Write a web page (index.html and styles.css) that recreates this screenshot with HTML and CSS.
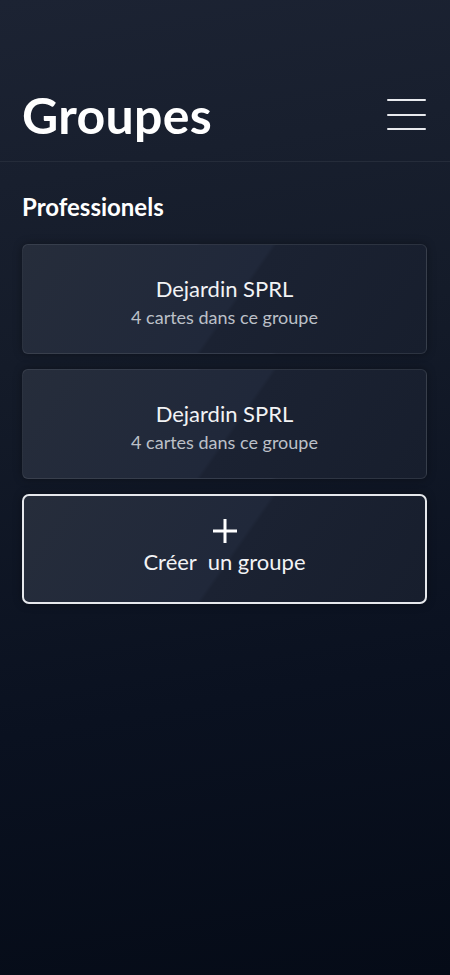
FILE: index.html
```html
<!DOCTYPE html>
<html lang="fr">
<head>
    <meta charset="UTF-8">
    <meta name="viewport" content="width=device-width, initial-scale=1.0">
    <title>Groupes</title>
    <link rel="stylesheet" href="styles.css">
</head>
<body>
    <header class="topbar">
        <h1>Groupes</h1>
        <button class="menu-btn" aria-label="Menu">
            <span></span>
            <span></span>
            <span></span>
        </button>
    </header>
    <main class="content">
        <h2 class="section-title">Professionels</h2>
        <div class="group-list">
            <a class="group-card" href="#">
                <span class="group-name">Dejardin SPRL</span>
                <span class="group-count">4 cartes dans ce groupe</span>
            </a>
            <a class="group-card" href="#">
                <span class="group-name">Dejardin SPRL</span>
                <span class="group-count">4 cartes dans ce groupe</span>
            </a>
            <a class="group-card add-card" href="#">
                <svg class="plus" width="26" height="26" viewBox="0 0 26 26">
                    <path d="M13 1v24M1 13h24" stroke="#fff" stroke-width="3" fill="none"/>
                </svg>
                <span class="group-name">Créer&nbsp; un groupe</span>
            </a>
        </div>
    </main>
</body>
</html>
```
FILE: styles.css
```css
html, body {
    margin: 0;
    padding: 0;
}
body {
    font-family: Lato, "Open Sans", sans-serif;
    color: #fff;
    min-height: 975px;
    background: linear-gradient(170deg, #1c2333 0%, #141b29 35%, #0a1120 70%, #050b17 100%);
}
.topbar {
    display: flex;
    align-items: flex-end;
    justify-content: space-between;
    height: 162px;
    padding: 0 24px 16px 22px;
    box-sizing: border-box;
    border-bottom: 1px solid #252c3a;
}
.topbar h1 {
    margin: 0;
    font-size: 50px;
    line-height: 60px;
    font-weight: 700;
    letter-spacing: 0.3px;
}
.menu-btn {
    display: flex;
    flex-direction: column;
    gap: 12.5px;
    margin-bottom: 15px;
    padding: 0;
    background: none;
    border: none;
    cursor: pointer;
}
.menu-btn span {
    display: block;
    width: 39px;
    height: 2px;
    background: #e8eaee;
    border-radius: 1px;
}
.content {
    padding: 0 23px 0 22px;
}
.section-title {
    margin: 30px 0 0 0;
    font-size: 24px;
    line-height: 30px;
    font-weight: 700;
}
.group-list {
    display: flex;
    flex-direction: column;
    gap: 15px;
    margin-top: 22px;
}
.group-card {
    display: flex;
    flex-direction: column;
    align-items: center;
    justify-content: center;
    height: 110px;
    padding-top: 6px;
    box-sizing: border-box;
    border: 1px solid rgba(255, 255, 255, 0.09);
    border-radius: 6px;
    text-decoration: none;
    color: #fff;
    background: linear-gradient(125deg, #262d3b 0%, #20283a 52%, #1b2232 53%, #171e2d 100%);
    box-shadow: 0 0 8px rgba(0, 0, 0, 0.35);
}
.group-name {
    font-size: 22px;
    line-height: 28px;
    color: #f2f3f5;
}
.group-count {
    font-size: 18px;
    line-height: 26px;
    margin-top: 1px;
    color: #bcc0c8;
}
.add-card {
    padding-top: 0;
    padding-bottom: 4px;
    border: 2px solid #e6e8ec;
    border-radius: 7px;
}
.add-card .plus {
    margin-bottom: 4px;
}
```
